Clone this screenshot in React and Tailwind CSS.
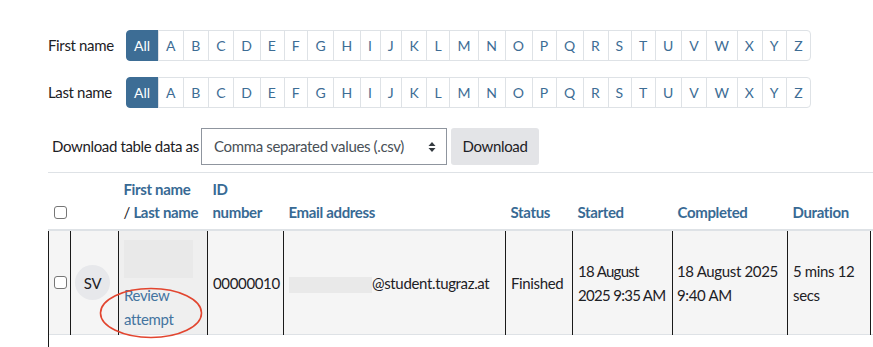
import React from "react";

const letters = "ABCDEFGHIJKLMNOPQRSTUVWXYZ".split("");

function InitialsBar({ label }) {
  return (
    <div className="flex items-center">
      <span className="w-[78px] text-[15px] text-[#1d2125]">{label}</span>
      <ul className="flex tracking-normal">
        <li className="h-[31px] pl-[7px] pr-[8px] flex items-center rounded-l-[4px] bg-[#3d6d95] border border-[#3d6d95] text-white text-[14px]">
          All
        </li>
        {letters.map((l, i) => (
          <li
            key={l}
            className={
              "h-[31px] pl-[7px] pr-[7.8px] -ml-px flex items-center border border-[#dee2e6] bg-white text-[#3d6d95] text-[14px] " +
              (i === letters.length - 1 ? "rounded-r-[4px]" : "")
            }
          >
            {l}
          </li>
        ))}
      </ul>
    </div>
  );
}

function Checkbox() {
  return <div className="w-[13px] h-[13px] border border-[#767676] rounded-[3px] bg-white" />;
}

function App() {
  return (
    <div
      className="relative w-[873px] h-[347px] overflow-hidden bg-white text-[#1d2125] tracking-[-0.35px]"
      style={{ fontFamily: "Lato, 'Open Sans', sans-serif" }}
    >
      <div className="pl-12 pt-[30px] flex flex-col gap-4">
        <InitialsBar label="First name" />
        <InitialsBar label="Last name" />
      </div>

      <div className="pl-[52px] mt-5 flex items-center">
        <span className="w-[149px] text-[15px]">Download table data as</span>
        <div className="w-[246px] h-[37px] border border-[#8f959e] flex items-center justify-between pl-3 pr-[10px] text-[15px] text-[#495057]">
          <span>Comma separated values (.csv)</span>
          <svg width="8" height="12" viewBox="0 0 8 12">
            <path d="M4 1 L7.5 5 L0.5 5 Z M4 11 L7.5 7 L0.5 7 Z" fill="#343a40" />
          </svg>
        </div>
        <button className="ml-1 w-[88px] h-[37px] bg-[#e3e4e7] rounded-[3px] text-[15px] text-[#1d2125]">
          Download
        </button>
      </div>

      <div className="ml-12 mt-[7px] border-t border-[#dee2e6]">
        <table className="table-fixed border-collapse w-[900px] text-[15px]">
          <colgroup>
            <col className="w-[22px]" />
            <col className="w-[48px]" />
            <col className="w-[89px]" />
            <col className="w-[76px]" />
            <col className="w-[222px]" />
            <col className="w-[67px]" />
            <col className="w-[100px]" />
            <col className="w-[115px]" />
            <col className="w-[83px]" />
            <col />
          </colgroup>
          <thead>
            <tr className="border-b-2 border-[#dee2e6] text-left align-bottom leading-[23px]">
              <th className="pl-[5px] pb-[10px]">
                <Checkbox />
              </th>
              <th />
              <th className="px-[5px] pt-[5px] pb-[5px] font-bold">
                <span className="text-[#386a94]">First name</span>
                <br />
                <span className="font-normal">/ </span>
                <span className="text-[#386a94]">Last name</span>
              </th>
              <th className="px-[5px] pb-[5px] font-bold text-[#386a94]">
                ID
                <br />
                number
              </th>
              <th className="px-[5px] pb-[5px] font-bold text-[#386a94]">Email address</th>
              <th className="px-[5px] pb-[5px] font-bold text-[#386a94]">Status</th>
              <th className="px-[5px] pb-[5px] font-bold text-[#386a94]">Started</th>
              <th className="px-[5px] pb-[5px] font-bold text-[#386a94]">Completed</th>
              <th className="px-[5px] pb-[5px] font-bold text-[#386a94]">Duration</th>
              <th />
            </tr>
          </thead>
          <tbody>
            <tr className="bg-[#f5f5f5] border-b border-[#dee2e6] leading-6 align-middle">
              <td className="border-x border-[#1a1a1a] pl-[5px]">
                <Checkbox />
              </td>
              <td className="border-x border-[#1a1a1a] pl-[4px]">
                <div className="w-[35px] h-[35px] rounded-full bg-[#e7e8eb] flex items-center justify-center text-[15px]">
                  SV
                </div>
              </td>
              <td className="border-x border-[#1a1a1a] bg-[#efefef] px-[5px] pt-1 pb-[3px]">
                <div className="my-[5px] h-[38px] w-[69px] bg-[#e9e9e9]" />
                <div className="text-[#44749f]">Review</div>
                <div className="text-[#44749f]">attempt</div>
              </td>
              <td className="border-x border-[#1a1a1a] px-[5px]">00000010</td>
              <td className="border-x border-[#1a1a1a] px-[5px] whitespace-nowrap">
                <span className="inline-block align-middle w-[83px] h-[16px] bg-[#e9e9e9]" />
                @student.tugraz.at
              </td>
              <td className="border-x border-[#1a1a1a] px-[5px]">Finished</td>
              <td className="border-x border-[#1a1a1a] pl-[5px] pr-0 tracking-[-0.7px]">
                18 August
                <br />
                2025 9:35 AM
              </td>
              <td className="border-x border-[#1a1a1a] px-[4px]">18 August 2025 9:40 AM</td>
              <td className="border-x border-[#1a1a1a] px-[5px]">5 mins 12 secs</td>
              <td className="bg-white" />
            </tr>
            <tr className="h-[20px]">
              <td className="border-l border-[#1a1a1a]" />
              <td colSpan={9} />
            </tr>
          </tbody>
        </table>
      </div>

      <svg
        className="absolute left-[99px] top-[287px] pointer-events-none"
        width="106"
        height="53"
        viewBox="0 0 106 53"
      >
        <ellipse cx="52" cy="26" rx="50.5" ry="24.5" fill="none" stroke="#e2452f" strokeWidth="1.6" />
      </svg>
    </div>
  );
}

export default App;
